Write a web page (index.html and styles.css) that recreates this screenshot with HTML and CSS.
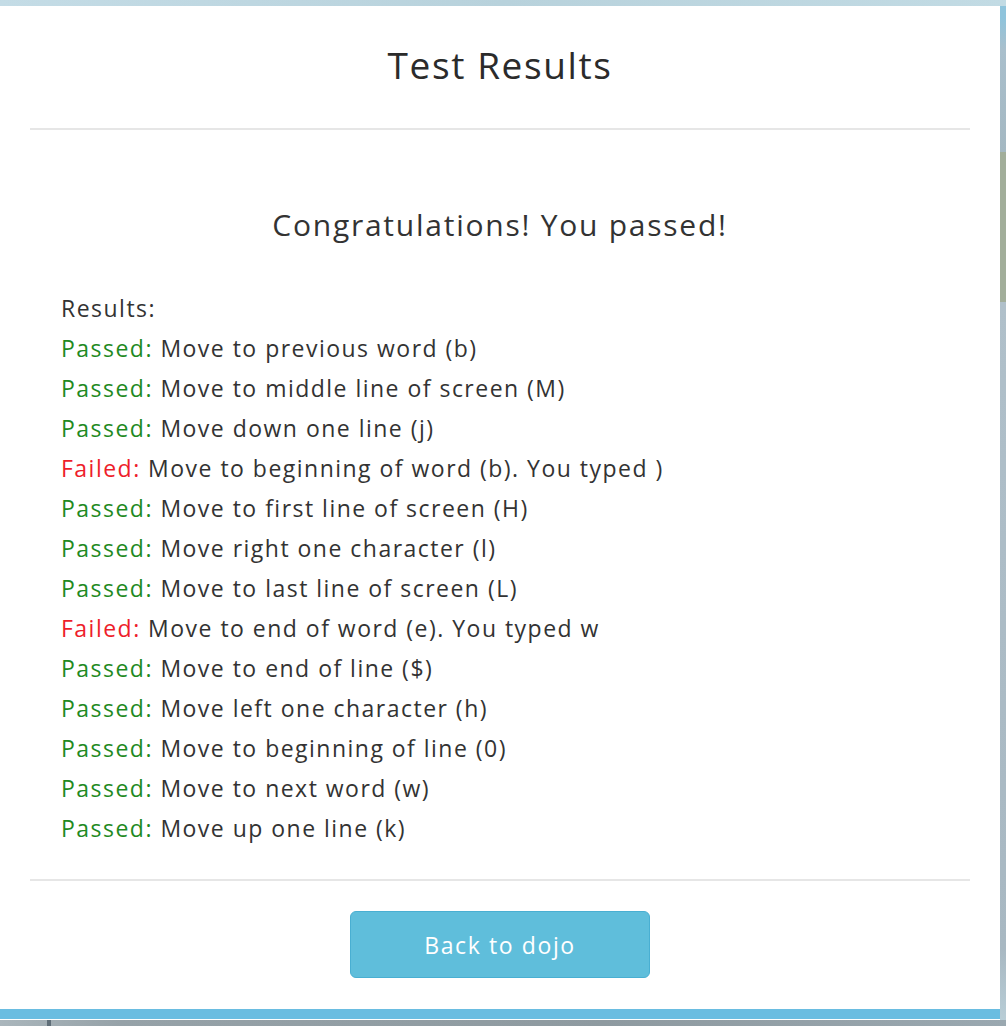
FILE: index.html
```html
<!DOCTYPE html>
<html>
<head>
<meta charset="utf-8">
<link rel="stylesheet" href="styles.css">
</head>
<body>
<div class="top-strip"></div>
<div class="row">
  <div class="modal">
    <div class="modal-header"><h1 class="title">Test Results</h1></div>
    <div class="divider"></div>
    <div class="modal-body">
      <h2 class="congrats">Congratulations! You passed!</h2>
      <ul class="results">
        <li>Results:</li>
        <li><span class="pass">Passed:</span> Move to previous word (b)</li>
        <li><span class="pass">Passed:</span> Move to middle line of screen (M)</li>
        <li><span class="pass">Passed:</span> Move down one line (j)</li>
        <li><span class="fail">Failed:</span> Move to beginning of word (b). You typed )</li>
        <li><span class="pass">Passed:</span> Move to first line of screen (H)</li>
        <li><span class="pass">Passed:</span> Move right one character (l)</li>
        <li><span class="pass">Passed:</span> Move to last line of screen (L)</li>
        <li><span class="fail">Failed:</span> Move to end of word (e). You typed w</li>
        <li><span class="pass">Passed:</span> Move to end of line ($)</li>
        <li><span class="pass">Passed:</span> Move left one character (h)</li>
        <li><span class="pass">Passed:</span> Move to beginning of line (0)</li>
        <li><span class="pass">Passed:</span> Move to next word (w)</li>
        <li><span class="pass">Passed:</span> Move up one line (k)</li>
      </ul>
    </div>
    <div class="divider"></div>
    <div class="modal-footer"><button class="btn">Back to dojo</button></div>
    <div class="bottom-band"></div>
  </div>
  <div class="side-strip">
    <div class="side-a"></div>
    <div class="side-b"></div>
    <div class="side-c"></div>
  </div>
</div>
<div class="bottom-strip"><div class="mark"></div></div>
</body>
</html>
```
FILE: styles.css
```css
html, body { margin: 0; padding: 0; }
body {
  width: 1006px;
  height: 1026px;
  overflow: hidden;
  background: #9aa8b0;
  font-family: "Open Sans", Lato, sans-serif;
  color: #333333;
}
.top-strip {
  height: 6px;
  background: linear-gradient(90deg, #c4dce6, #b8d2dc 50%, #c2dbe4);
}
.row { display: flex; height: 1014px; }
.modal {
  width: 1000px;
  background: #ffffff;
  display: flex;
  flex-direction: column;
}
.modal-header {
  height: 118px;
  padding-bottom: 4px;
  display: flex;
  align-items: center;
  justify-content: center;
}
.title {
  margin: 0;
  font-weight: 400;
  font-size: 37px;
  line-height: 44px;
  letter-spacing: 1.6px;
  color: #2b2b2b;
}
.divider {
  height: 2px;
  margin: 0 30px;
  background: #e6e6e6;
}
.modal-body { padding: 75px 0 31px 61px; }
.congrats {
  margin: 0 0 43px -61px;
  text-align: center;
  font-weight: 400;
  font-size: 30px;
  line-height: 40px;
  letter-spacing: 1.75px;
  color: #333333;
}
.results {
  list-style: none;
  margin: 0;
  padding: 0;
  font-size: 23px;
  line-height: 40px;
  letter-spacing: 1.48px;
  color: #333333;
}
.pass { color: #1f8a1f; }
.fail { color: #ee1d2a; }
.modal-footer {
  padding: 30px 0 31px;
  display: flex;
  justify-content: center;
}
.btn {
  width: 300px;
  height: 67px;
  border: 1px solid #49afd2;
  border-radius: 6px;
  background: #5fbedb;
  color: #ffffff;
  font-family: "Open Sans", Lato, sans-serif;
  font-size: 23px;
  letter-spacing: 1.6px;
  padding: 0;
}
.bottom-band { height: 10px; background: #6abde1; }
.side-strip {
  width: 6px;
  display: flex;
  flex-direction: column;
}
.side-a { height: 146px; background: linear-gradient(180deg, #8fc4dc 0, #8fc4dc 8%, #a9bfcc 30%, #a4b8c2); }
.side-b { height: 150px; background: #a2ae9a; }
.side-c { flex: 1; background: linear-gradient(180deg, #b0c0ca, #a8b8c2 90%, #b8cdd6); }
.bottom-strip {
  height: 6px;
  background: linear-gradient(90deg, #aab6bc 0, #96a2a8 12%, #8e9aa0 60%, #9aa8b0);
  position: relative;
}
.mark {
  position: absolute;
  left: 47px;
  top: 0;
  width: 4px;
  height: 6px;
  background: #5f6e78;
}
```
